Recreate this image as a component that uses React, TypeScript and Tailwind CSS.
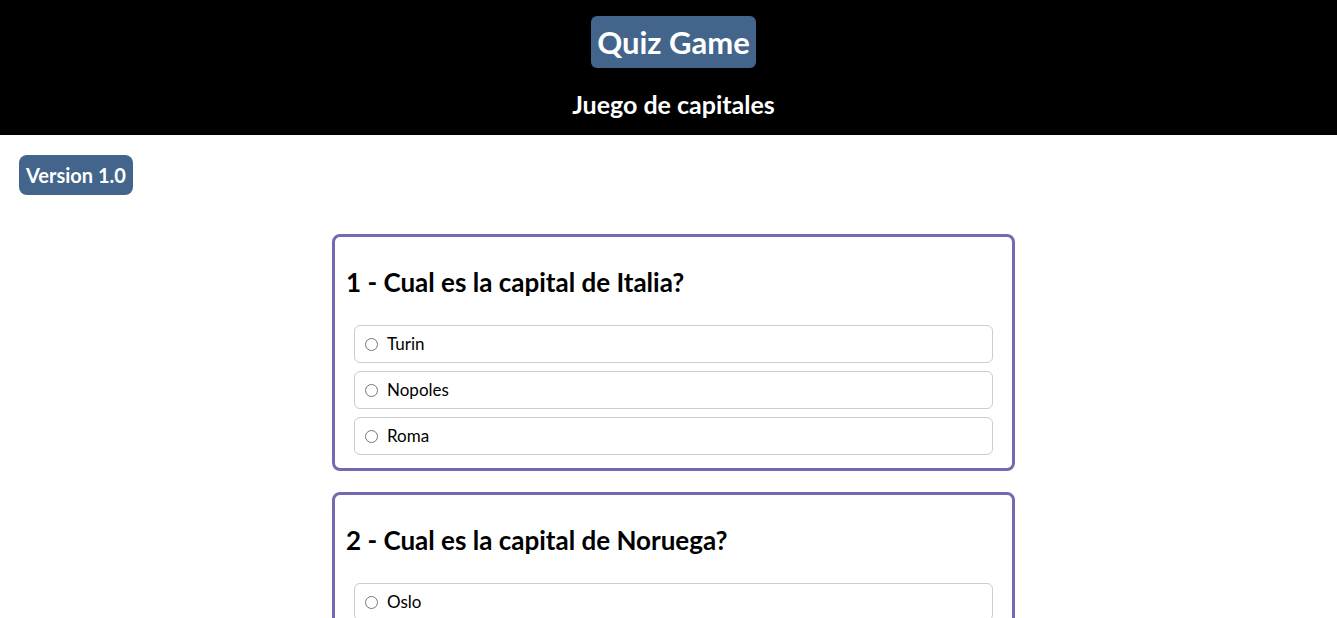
import { useState } from "react";

const preguntas = [
  {
    id: 1,
    texto: "Cual es la capital de Italia?",
    opciones: ["Turin", "Nopoles", "Roma"],
  },
  {
    id: 2,
    texto: "Cual es la capital de Noruega?",
    opciones: ["Oslo", "Bergen", "Stavanger"],
  },
];

function App() {
  const [respuestas, setRespuestas] = useState<Record<number, string>>({});

  return (
    <div className="min-h-screen bg-white font-['Lato','Noto_Sans',sans-serif] text-black">
      <header className="flex flex-col items-center bg-black pt-4 pb-[13px] pl-[10px]">
        <h1 className="rounded-md bg-[#43658b] px-[6px] text-[31px] leading-[52px] font-bold text-white">
          Quiz Game
        </h1>
        <h2 className="mt-[18px] text-[25px] leading-[36px] font-bold text-white">
          Juego de capitales
        </h2>
      </header>

      <div className="px-[19px] pt-5">
        <span className="inline-block rounded-lg bg-[#43658b] px-[7px] text-[20px] leading-[40px] font-bold text-white">
          Version 1.0
        </span>
      </div>

      <main className="mt-[39px] flex flex-col items-center gap-[21px] pl-[10px]">
        {preguntas.map((p) => (
          <section
            key={p.id}
            className="w-[683px] rounded-lg border-[3px] border-[#7569b0] px-[19px] pt-[19px] pb-[13px]"
          >
            <h3 className="-ml-[8px] text-[26px] leading-[52px] font-bold">
              {p.id} - {p.texto}
            </h3>
            <div className="mt-[17px] flex flex-col gap-2">
              {p.opciones.map((o) => (
                <label
                  key={o}
                  className="flex h-[38px] items-center gap-[9px] rounded-md border border-[#cccccc] px-[10px] text-[17px]"
                >
                  <input
                    type="radio"
                    name={"p" + p.id}
                    checked={respuestas[p.id] === o}
                    onChange={() => setRespuestas({ ...respuestas, [p.id]: o })}
                    className="m-0 h-[13px] w-[13px]"
                  />
                  {o}
                </label>
              ))}
            </div>
          </section>
        ))}
      </main>
    </div>
  );
}

export default App;
